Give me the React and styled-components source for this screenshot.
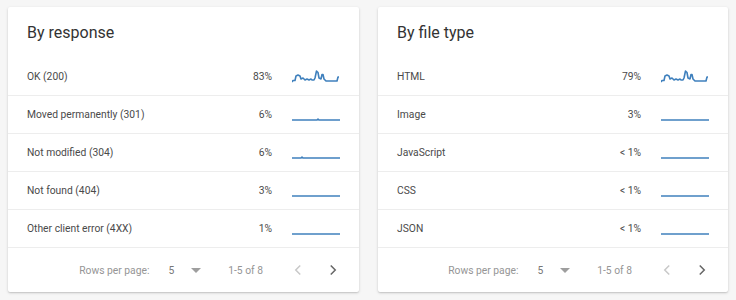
import React from "react";
import styled, { createGlobalStyle } from "styled-components";

const GlobalStyle = createGlobalStyle`
  body {
    margin: 0;
    background: #f6f6f6;
    font-family: Roboto, "Liberation Sans", Arial, sans-serif;
  }
`;

const Page = styled.div`
  display: grid;
  grid-template-columns: 351px 350px;
  column-gap: 19px;
  padding: 7px 8px;
`;

const Card = styled.section`
  background: #fff;
  border-radius: 2px;
  box-shadow: 0 1px 3px rgba(0, 0, 0, 0.16), 0 1px 1px rgba(0, 0, 0, 0.08);
  display: flex;
  flex-direction: column;
`;

const Title = styled.h2`
  margin: 0;
  height: 51px;
  padding: 0 19px;
  display: flex;
  align-items: center;
  font-size: 16px;
  font-weight: 400;
  color: #333;
`;

const Row = styled.div`
  height: 38px;
  padding: 0 19px;
  display: flex;
  align-items: center;
  border-bottom: 1px solid #ededed;
  box-sizing: border-box;
  font-size: 10.3px;
  color: #4a4a4a;
`;

const Label = styled.span`
  flex: 1;
`;

const Percent = styled.span`
  width: 60px;
  text-align: right;
  margin-right: 20px;
`;

const Spark = styled.svg`
  width: 48px;
  height: 14px;
  margin-top: 1px;
  display: block;
`;

const Footer = styled.div`
  height: 44px;
  display: flex;
  align-items: center;
  justify-content: flex-end;
  padding-right: 14px;
  font-size: 10.3px;
  color: #959595;
`;

const RowsLabel = styled.span`
  margin-right: 19px;
`;

const PageSize = styled.span`
  color: #777;
  margin-right: 17px;
`;

const Range = styled.span`
  margin-left: 27px;
  margin-right: 23px;
`;

const IconButton = styled.span`
  width: 24px;
  height: 24px;
  display: flex;
  align-items: center;
  justify-content: center;
  color: ${(p) => (p.$disabled ? "#c8c8c8" : "#666")};
  & + & {
    margin-left: 11px;
  }
`;

const busy =
  "0,12 1,10.5 3,10.5 4,6 6,5 8,6 9,9 11,8 13,10 15,9 17,10 19,9 20,10 22,10 23,8 24.5,1 26,2.5 27,8 29,9 30,4.5 31,4.5 32,9 34,11 38,11 42,11 45,11 46,7 47,7";

const sparks = {
  busy,
  bumpLate: "0,12 25,12 26,11 27,12 48,12",
  bumpEarly: "0,12 9,12 10,11 11,12 48,12",
  flat: "0,12 48,12",
};

const Sparkline = ({ kind }) => (
  <Spark viewBox="0 0 48 14">
    <polyline
      points={sparks[kind]}
      fill="none"
      stroke="#3f80bd"
      strokeWidth="1.6"
      strokeLinejoin="round"
    />
  </Spark>
);

const Chevron = ({ left }) => (
  <svg width="18" height="18" viewBox="0 0 24 24">
    <path
      d={left ? "M15 6l-6 6 6 6" : "M9 6l6 6-6 6"}
      fill="none"
      stroke="currentColor"
      strokeWidth="2"
    />
  </svg>
);

const Caret = () => (
  <svg width="10" height="5" viewBox="0 0 10 5">
    <path d="M0 0h10L5 5z" fill="#9e9e9e" />
  </svg>
);

const tables = [
  {
    title: "By response",
    rows: [
      ["OK (200)", "83%", "busy"],
      ["Moved permanently (301)", "6%", "bumpLate"],
      ["Not modified (304)", "6%", "bumpEarly"],
      ["Not found (404)", "3%", "flat"],
      ["Other client error (4XX)", "1%", "flat"],
    ],
  },
  {
    title: "By file type",
    rows: [
      ["HTML", "79%", "busy"],
      ["Image", "3%", "flat"],
      ["JavaScript", "< 1%", "flat"],
      ["CSS", "< 1%", "flat"],
      ["JSON", "< 1%", "flat"],
    ],
  },
];

const App = () => (
  <>
    <GlobalStyle />
    <Page>
      {tables.map((t) => (
        <Card key={t.title}>
          <Title>{t.title}</Title>
          {t.rows.map(([label, pct, kind]) => (
            <Row key={label}>
              <Label>{label}</Label>
              <Percent>{pct}</Percent>
              <Sparkline kind={kind} />
            </Row>
          ))}
          <Footer>
            <RowsLabel>Rows per page:</RowsLabel>
            <PageSize>5</PageSize>
            <Caret />
            <Range>1-5 of 8</Range>
            <IconButton $disabled>
              <Chevron left />
            </IconButton>
            <IconButton>
              <Chevron />
            </IconButton>
          </Footer>
        </Card>
      ))}
    </Page>
  </>
);

export default App;
